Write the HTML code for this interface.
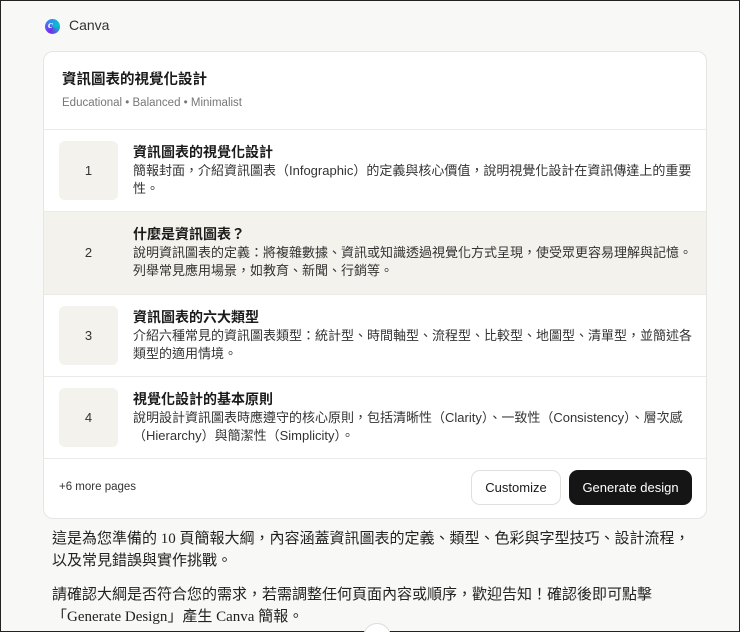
<!DOCTYPE html>
<html><head><meta charset="utf-8"><style>
*{margin:0;padding:0;box-sizing:border-box}
html,body{width:740px;height:632px;overflow:hidden}
body{background:#f8f8f7;font-family:"Liberation Sans","Noto Sans CJK TC",sans-serif;color:#1a1a1a;position:relative;border:1px solid #222}
.logo{position:absolute;left:44px;top:18px;width:15px;height:15px;border-radius:50%;background:conic-gradient(from 200deg,#7d2ae8,#3b82f6,#00c4cc,#7d2ae8)}
.logo span{position:absolute;left:3px;top:0;color:#fff;font:italic bold 11px "Liberation Serif",serif}
.brand{position:absolute;left:68px;top:16px;font-size:14px;color:#333}
.card{position:absolute;left:42px;top:50px;width:664px;height:468px;background:#fff;border:1px solid #e6e5e1;border-radius:10px;overflow:hidden}
.h1{position:absolute;left:18px;top:16px;font-size:14.5px;font-weight:bold}
.tags{position:absolute;left:18px;top:45px;font-size:11.5px;color:#777}
.row{position:absolute;left:0;width:662px;height:83px;border-top:1px solid #ebeae6}
.row.hl{background:#f3f2ec}
.num{position:absolute;left:15px;top:11px;width:59px;height:59px;border-radius:6px;background:#f3f2ec;text-align:center;line-height:59px;font-size:13px;color:#333}
.row.hl .num{background:transparent}
.t{position:absolute;left:89px;top:12px;font-size:14px;font-weight:bold}
.d{position:absolute;left:89px;top:32px;width:560px;font-size:13px;line-height:18px;color:#333}
.foot{position:absolute;left:0;top:406px;width:662px;height:62px;border-top:1px solid #ebeae6}
.more{position:absolute;left:15px;top:22px;font-size:11.5px;color:#333}
.b1{position:absolute;left:427px;top:11px;width:90px;height:35px;border:1px solid #e0dfdb;border-radius:9px;text-align:center;line-height:33px;font-size:13px;background:#fff}
.b2{position:absolute;left:525px;top:11px;width:123px;height:35px;border-radius:9px;background:#151515;color:#fff;text-align:center;line-height:35px;font-size:13px}
.p{position:absolute;left:51px;font-family:"Liberation Serif","Noto Sans CJK TC",serif;font-size:15px;line-height:22px;color:#222;width:650px}
</style></head><body>
<div class="logo"><span>c</span></div>
<div class="brand">Canva</div>
<div class="card">
<div class="h1">資訊圖表的視覺化設計</div>
<div class="tags">Educational • Balanced • Minimalist</div>
<div class="row" style="top:77px"><div class="num">1</div><div class="t">資訊圖表的視覺化設計</div><div class="d">簡報封面，介紹資訊圖表（Infographic）的定義與核心價值，說明視覺化設計在資訊傳達上的重要性。</div></div>
<div class="row hl" style="top:159px"><div class="num">2</div><div class="t">什麼是資訊圖表？</div><div class="d">說明資訊圖表的定義：將複雜數據、資訊或知識透過視覺化方式呈現，使受眾更容易理解與記憶。<br>列舉常見應用場景，如教育、新聞、行銷等。</div></div>
<div class="row" style="top:242px"><div class="num">3</div><div class="t">資訊圖表的六大類型</div><div class="d">介紹六種常見的資訊圖表類型：統計型、時間軸型、流程型、比較型、地圖型、清單型，並簡述各<br>類型的適用情境。</div></div>
<div class="row" style="top:324px"><div class="num">4</div><div class="t">視覺化設計的基本原則</div><div class="d">說明設計資訊圖表時應遵守的核心原則，包括清晰性（Clarity）、一致性（Consistency）、層次感<br>（Hierarchy）與簡潔性（Simplicity）。</div></div>
<div class="foot"><div class="more">+6 more pages</div><div class="b1">Customize</div><div class="b2">Generate design</div></div>
</div>
<div class="p" style="top:527px">這是為您準備的 10 頁簡報大綱，內容涵蓋資訊圖表的定義、類型、色彩與字型技巧、設計流程，<br>以及常見錯誤與實作挑戰。</div>
<div class="p" style="top:583px">請確認大綱是否符合您的需求，若需調整任何頁面內容或順序，歡迎告知！確認後即可點擊<br>「Generate Design」產生 Canva 簡報。</div>
<div style="position:absolute;left:362px;top:622px;width:28px;height:28px;border-radius:50%;border:1px solid #ddd;background:#fff"></div>
</body></html>
